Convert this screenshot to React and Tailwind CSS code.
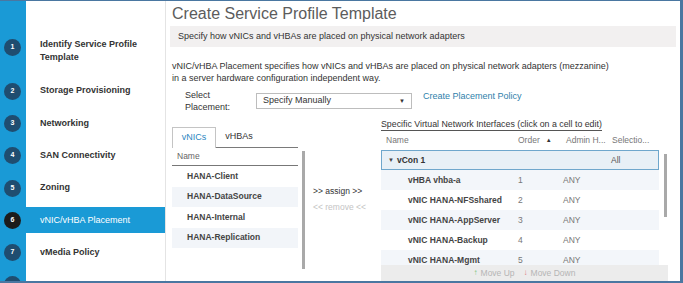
import React from 'react';

const steps = [
  { n: 1, label: ['Identify Service Profile', 'Template'] },
  { n: 2, label: ['Storage Provisioning'] },
  { n: 3, label: ['Networking'] },
  { n: 4, label: ['SAN Connectivity'] },
  { n: 5, label: ['Zoning'] },
  { n: 6, label: ['vNIC/vHBA Placement'], active: true },
  { n: 7, label: ['vMedia Policy'] },
  { n: 8, label: [], hidden: true },
];

const vnics = ['HANA-Client', 'HANA-DataSource', 'HANA-Internal', 'HANA-Replication'];

const rows = [
  { name: 'vHBA vhba-a', order: 1 },
  { name: 'vNIC HANA-NFSshared', order: 2 },
  { name: 'vNIC HANA-AppServer', order: 3 },
  { name: 'vNIC HANA-Backup', order: 4 },
  { name: 'vNIC HANA-Mgmt', order: 5 },
];

function Circle({ n, active }) {
  return (
    <div
      className={
        'w-[17px] h-[17px] rounded-full flex items-center justify-center text-[7px] font-bold text-white ' +
        (active ? 'bg-[#1c1c1c]' : 'bg-[#1f4d70]')
      }
    >
      {n}
    </div>
  );
}

function Sidebar() {
  return (
    <div className="w-[165px] shrink-0 flex flex-col">
      <div className="h-[29px] flex shrink-0">
        <div className="w-[26px] bg-[#1a9ad6]" />
      </div>
      {steps.map((s) =>
        s.n === 1 ? (
          <div key={s.n} className="h-[45px] flex shrink-0">
            <div className="w-[26px] bg-[#1a9ad6] pl-[4px] pt-[9px]">
              <Circle n={s.n} />
            </div>
            <div className="flex-1 pl-[14px] pt-[8px] text-[9px] leading-[13px] font-bold text-[#333]">
              {s.label.map((l) => (
                <div key={l}>{l}</div>
              ))}
            </div>
          </div>
        ) : (
          <div key={s.n} className="h-[32.3px] flex items-center shrink-0">
            <div className="w-[26px] self-stretch bg-[#1a9ad6] pl-[4px] flex items-center">
              <Circle n={s.hidden ? '' : s.n} active={s.active} />
            </div>
            <div
              className={
                'flex-1 h-[26px] pl-[14px] flex items-center text-[9px] ' +
                (s.active ? 'bg-[#1a9ad6] text-white' : 'font-bold text-[#333]')
              }
            >
              {s.label[0]}
            </div>
          </div>
        )
      )}
    </div>
  );
}

function LeftList() {
  return (
    <div className="w-[133px] flex flex-col">
      <div className="w-[126px] h-[21px] mt-[9px] flex border-b border-[#7a7a7a]">
        <div className="w-[44px] h-[21px] border border-b-0 border-[#c4c4c4] bg-white flex items-center justify-center text-[9px] text-[#2a86c1]">
          vNICs
        </div>
        <div className="w-[46px] flex items-center justify-center text-[9px] text-[#333]">vHBAs</div>
      </div>
      <div className="flex">
        <div className="w-[126px]">
          <div className="h-[18px] flex items-center pl-[5px] text-[8.5px] text-[#666] border-b border-[#777]">Name</div>
          {vnics.map((v, i) => (
            <div
              key={v}
              className={
                'h-[20.5px] flex items-center pl-[15px] text-[8.5px] font-bold text-[#444] ' +
                (i % 2 === 1 ? 'bg-[#f2f5f9]' : '')
              }
            >
              {v}
            </div>
          ))}
        </div>
        <div className="ml-[4px] mt-[3px] w-[3px] h-[118px] bg-[#a9a9a9]" />
      </div>
    </div>
  );
}

function RightTable() {
  return (
    <div className="w-[295px] flex flex-col pl-[3px]">
      <div className="self-start leading-[12px] text-[8.8px] text-[#333] border-b border-[#555]">
        Specific Virtual Network Interfaces (click on a cell to edit)
      </div>
      <div className="h-[19px] flex items-center text-[8.5px] text-[#777]">
        <div className="w-[137px] pl-[5px]">Name</div>
        <div className="w-[48px] flex items-center">
          Order <span className="ml-[6px] text-[6px] text-[#333]">▲</span>
        </div>
        <div className="w-[46px]">Admin H...</div>
        <div>Selectio...</div>
      </div>
      <div className="flex">
        <div className="w-[278px] h-[115px] overflow-hidden">
          <div className="h-[20px] border-[1.5px] border-[#6fa7cc] bg-[#e8f0f6] flex items-center text-[8.5px] font-bold text-[#333]">
            <div className="w-[229px] pl-[6px] flex items-center">
              <span className="text-[6px] mr-[3px] text-[#444]">▼</span>vCon 1
            </div>
            <div className="font-normal text-[#555]">All</div>
          </div>
          {rows.map((r, i) => (
            <div
              key={r.name}
              className={
                'h-[20px] flex items-center text-[8.5px] ' + (i % 2 === 0 ? 'bg-[#f3f6fa]' : 'bg-white')
              }
            >
              <div className="w-[137px] pl-[27px] font-bold text-[#444]">{r.name}</div>
              <div className="w-[45px] text-[#777]">{r.order}</div>
              <div className="text-[#777]">ANY</div>
            </div>
          ))}
        </div>
        <div className="ml-[5px] mt-[4px] w-[3px] h-[63px] bg-[#a9a9a9]" />
      </div>
      <div className="w-[287px] h-[16px] bg-[#ececec] flex items-center justify-center gap-[9px] text-[8.5px] text-[#b5b5b5]">
        <span className="flex items-center gap-[3px]">
          <span className="text-[#7cc47c] text-[8px]">↑</span>Move Up
        </span>
        <span className="flex items-center gap-[3px]">
          <span className="text-[#e08080] text-[8px]">↓</span>Move Down
        </span>
      </div>
    </div>
  );
}

export default function App() {
  return (
    <div
      className="w-[683px] h-[283px] overflow-hidden bg-white flex border-t border-r-[3px] border-b-2 border-[#4a77a1]"
      style={{ fontFamily: '"Liberation Sans", Arial, sans-serif' }}
    >
      <Sidebar />
      <div className="flex-1 flex flex-col border-l border-[#e4e4e4]">
        <div className="h-[26px] pl-[6px] pt-[3px] text-[16px] leading-[19px] text-[#5c5c5c]">
          Create Service Profile Template
        </div>
        <div className="mx-[4px] h-[22px] bg-[#f2f0f0] flex items-center pl-[8px] text-[9px] text-[#333]">
          Specify how vNICs and vHBAs are placed on physical network adapters
        </div>
        <div className="mt-[13px] pl-[6px] text-[9px] leading-[12px] text-[#333]">
          <div>vNIC/vHBA Placement specifies how vNICs and vHBAs are placed on physical network adapters (mezzanine)</div>
          <div>in a server hardware configuration independent way.</div>
        </div>
        <div className="mt-[5px] flex">
          <div className="w-[90px] pl-[19px] text-[9px] leading-[12px] text-[#333]">
            <div>Select</div>
            <div>Placement:</div>
          </div>
          <div className="mt-[4px] w-[156px] h-[16px] border border-[#bdbdbd] flex items-center justify-between pl-[6px] pr-[6px] text-[9px] text-[#333]">
            <span>Specify Manually</span>
            <span className="text-[6px] text-[#333]">▼</span>
          </div>
          <div className="ml-[11px] mt-[1px] text-[9px] leading-[12px] text-[#2f7fab]">Create Placement Policy</div>
        </div>
        <div className="mt-[5px] flex pl-[6px]">
          <LeftList />
          <div className="w-[73px] pl-[8px] pt-[67px] text-[8.5px] leading-[12px]">
            <div className="text-[#333]">&gt;&gt; assign &gt;&gt;</div>
            <div className="mt-[4px] text-[#c4c4c4]">&lt;&lt; remove &lt;&lt;</div>
          </div>
          <RightTable />
        </div>
      </div>
    </div>
  );
}
